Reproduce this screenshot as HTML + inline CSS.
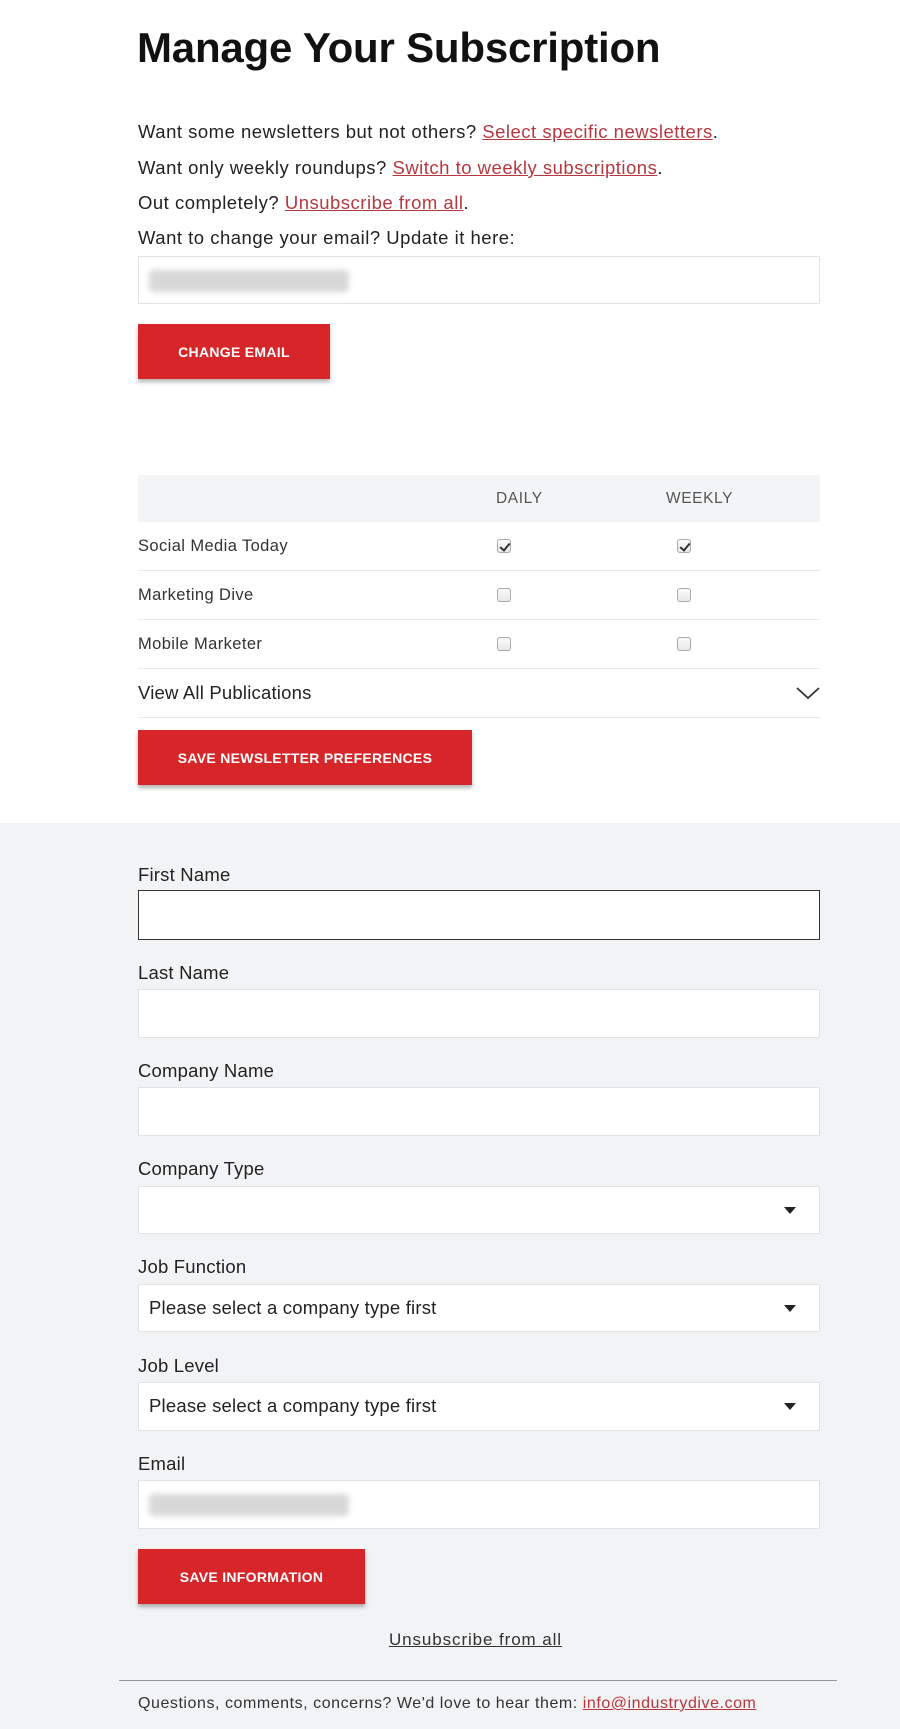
<!DOCTYPE html>
<html><head><style>
*{margin:0;padding:0;box-sizing:border-box}
body{width:900px;height:1729px;position:relative;background:#fff;font-family:"Liberation Sans",Arial,sans-serif;color:#222;overflow:hidden}
.a{position:absolute}
h1{position:absolute;left:137px;top:24px;font-size:42px;font-weight:bold;color:#111;letter-spacing:-0.2px}
.p{position:absolute;left:138px;font-size:18.5px;color:#222;letter-spacing:.5px}
.p a,.ft a{color:#b7373f;text-decoration:underline}
.in{position:absolute;left:138px;width:682px;background:#fff;border:1px solid #e2e3e5}
.blur{position:absolute;left:10px;top:13px;width:200px;height:22px;background:#d8d8d8;filter:blur(3px);border-radius:4px}
.btn{position:absolute;left:138px;height:55px;background:#d72629;color:#fff;font-weight:bold;font-size:14px;display:flex;align-items:center;justify-content:center;box-shadow:0 3px 4px rgba(0,0,0,.3);letter-spacing:.3px}
.row{position:absolute;left:138px;width:682px;border-bottom:1px solid #e8e9ea;font-size:16.5px;color:#333;display:flex;align-items:center;letter-spacing:.4px}
.cb{position:absolute;width:14px;height:14px;border:1px solid #aaa;border-radius:3px;background:linear-gradient(#fafafa,#e8e8e8)}
.cb.c::after{content:"";position:absolute;left:4px;top:1px;width:4px;height:8px;border:solid #333;border-width:0 2px 2px 0;transform:rotate(40deg)}
.gray{position:absolute;left:0;top:823px;width:900px;height:906px;background:#f2f3f5}
.lb{position:absolute;left:138px;font-size:18.5px;color:#222;letter-spacing:.2px}
.sel::after{content:"";position:absolute;right:23px;top:20px;border:6px solid transparent;border-top:7px solid #222;border-bottom:0}
.st{position:absolute;left:10px;top:12px;font-size:18.5px;color:#222;letter-spacing:.2px}
</style></head><body>
<h1>Manage Your Subscription</h1>
<div class="p" style="top:121px">Want some newsletters but not others? <a>Select specific newsletters</a>.</div>
<div class="p" style="top:157px">Want only weekly roundups? <a>Switch to weekly subscriptions</a>.</div>
<div class="p" style="top:192px">Out completely? <a>Unsubscribe from all</a>.</div>
<div class="p" style="top:227px">Want to change your email? Update it here:</div>
<div class="in" style="top:256px;height:48px"><div class="blur"></div></div>
<div class="btn" style="top:324px;width:192px">CHANGE EMAIL</div>

<div class="a" style="left:138px;top:475px;width:682px;height:47px;background:#f3f4f5"></div>
<div class="a" style="left:496px;top:490px;font-size:15.5px;color:#555;letter-spacing:.6px">DAILY</div>
<div class="a" style="left:666px;top:490px;font-size:15.5px;color:#555;letter-spacing:.6px">WEEKLY</div>
<div class="row" style="top:522px;height:49px">Social Media Today</div>
<div class="row" style="top:571px;height:49px">Marketing Dive</div>
<div class="row" style="top:620px;height:49px">Mobile Marketer</div>
<div class="row" style="top:669px;height:49px;font-size:18.5px;color:#222;letter-spacing:.2px">View All Publications</div>
<svg class="a" style="left:796px;top:686px" width="24" height="14"><path d="M1 2 L12 12 L23 2" fill="none" stroke="#333" stroke-width="1.8"/></svg>
<div class="cb c" style="left:497px;top:539px"></div><div class="cb c" style="left:677px;top:539px"></div>
<div class="cb" style="left:497px;top:588px"></div><div class="cb" style="left:677px;top:588px"></div>
<div class="cb" style="left:497px;top:637px"></div><div class="cb" style="left:677px;top:637px"></div>
<div class="btn" style="top:730px;width:334px">SAVE NEWSLETTER PREFERENCES</div>

<div class="gray"></div>
<div class="lb" style="top:864px">First Name</div>
<div class="in" style="top:890px;height:50px;border:1.5px solid #333"></div>
<div class="lb" style="top:962px">Last Name</div>
<div class="in" style="top:989px;height:49px"></div>
<div class="lb" style="top:1060px">Company Name</div>
<div class="in" style="top:1087px;height:49px"></div>
<div class="lb" style="top:1158px">Company Type</div>
<div class="in sel" style="top:1186px;height:48px"></div>
<div class="lb" style="top:1256px">Job Function</div>
<div class="in sel" style="top:1284px;height:48px"><div class="st">Please select a company type first</div></div>
<div class="lb" style="top:1355px">Job Level</div>
<div class="in sel" style="top:1382px;height:49px"><div class="st">Please select a company type first</div></div>
<div class="lb" style="top:1453px">Email</div>
<div class="in" style="top:1480px;height:49px"><div class="blur"></div></div>
<div class="btn" style="top:1549px;width:227px">SAVE INFORMATION</div>
<div class="a" style="left:389px;top:1630px;font-size:17px;color:#333;letter-spacing:.9px"><span style="text-decoration:underline">Unsubscribe from all</span></div>
<div class="a" style="left:119px;top:1680px;width:718px;height:1px;background:#999"></div>
<div class="a ft" style="left:138px;top:1695px;font-size:16px;color:#333;letter-spacing:.55px">Questions, comments, concerns? We'd love to hear them: <a>info@industrydive.com</a></div>
</body></html>
